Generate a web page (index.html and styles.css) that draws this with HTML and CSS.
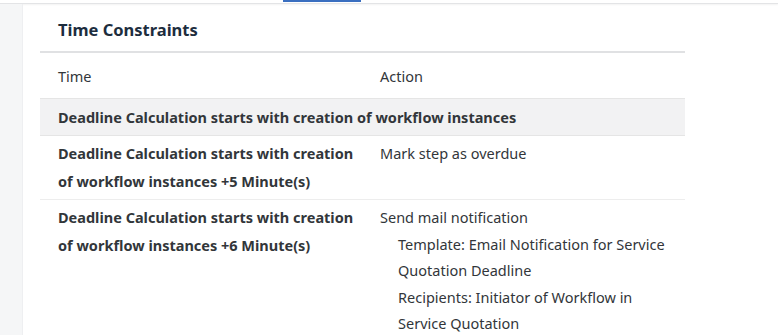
FILE: index.html
```html
<!DOCTYPE html>
<html lang="en">
<head>
    <meta charset="UTF-8">
    <title>Time Constraints</title>
    <link rel="stylesheet" href="styles.css">
</head>
<body>
    <div class="topbar">
        <span class="tab-indicator"></span>
    </div>
    <main class="layout">
        <aside class="side-strip"></aside>
        <section class="panel">
            <h2 class="panel-title">Time Constraints</h2>
            <table class="constraints">
                <thead>
                    <tr>
                        <th class="col-time">Time</th>
                        <th>Action</th>
                    </tr>
                </thead>
                <tbody>
                    <tr class="group-row">
                        <td colspan="2">Deadline Calculation starts with creation of workflow instances</td>
                    </tr>
                    <tr>
                        <td class="col-time strong">Deadline Calculation starts with creation of workflow instances +5 Minute(s)</td>
                        <td>Mark step as overdue</td>
                    </tr>
                    <tr>
                        <td class="col-time strong">Deadline Calculation starts with creation of workflow instances +6 Minute(s)</td>
                        <td>
                            Send mail notification
                            <div class="detail">Template: Email Notification for Service Quotation Deadline</div>
                            <div class="detail">Recipients: Initiator of Workflow in Service Quotation</div>
                        </td>
                    </tr>
                </tbody>
            </table>
        </section>
    </main>
</body>
</html>
```

FILE: styles.css
```css
* { box-sizing: border-box; }

body {
    margin: 0;
    background: #ffffff;
    color: #32363a;
    font-family: 'Noto Sans', 'Open Sans', sans-serif;
    font-size: 14.5px;
}

.topbar {
    height: 4px;
    border-bottom: 1px solid #e3e4e6;
    box-shadow: 0 1px 2px rgba(0, 0, 0, 0.05);
    display: flex;
}

.tab-indicator {
    margin-left: 283px;
    width: 78px;
    height: 2px;
    background: #3a6fc0;
}

.layout {
    display: flex;
    min-height: 331px;
}

.side-strip {
    width: 23px;
    background: #f5f6f7;
    border-right: 1px solid #eeeff1;
}

.panel {
    padding-left: 17px;
}

.panel-title {
    margin: 0;
    height: 49px;
    padding-top: 15px;
    padding-left: 18px;
    font-size: 16.5px;
    font-weight: 700;
    color: #1d2d3e;
    line-height: 22px;
    width: 645px;
    border-bottom: 2px solid #e0e1e3;
}

.constraints {
    width: 645px;
    border-collapse: collapse;
    table-layout: fixed;
}

.constraints th,
.constraints td {
    text-align: left;
    vertical-align: top;
    padding: 0 16px 0 18px;
}

.constraints th {
    font-weight: 400;
    height: 45px;
    padding-top: 2px;
    line-height: 42px;
    border-bottom: 1px solid #e5e5e5;
}

.constraints .col-time {
    width: 322px;
    padding-right: 4px;
}

.group-row td {
    background: #f2f2f3;
    font-weight: 700;
    height: 36px;
    line-height: 36px;
    border-bottom: 1px solid #e5e5e5;
}

.constraints tbody tr:not(.group-row) td {
    padding-top: 3px;
    padding-bottom: 4px;
    line-height: 28px;
    border-bottom: 1px solid #ededed;
}

.constraints td.strong {
    font-weight: 700;
}

.detail {
    padding-left: 18px;
    line-height: 26.5px;
}
```
